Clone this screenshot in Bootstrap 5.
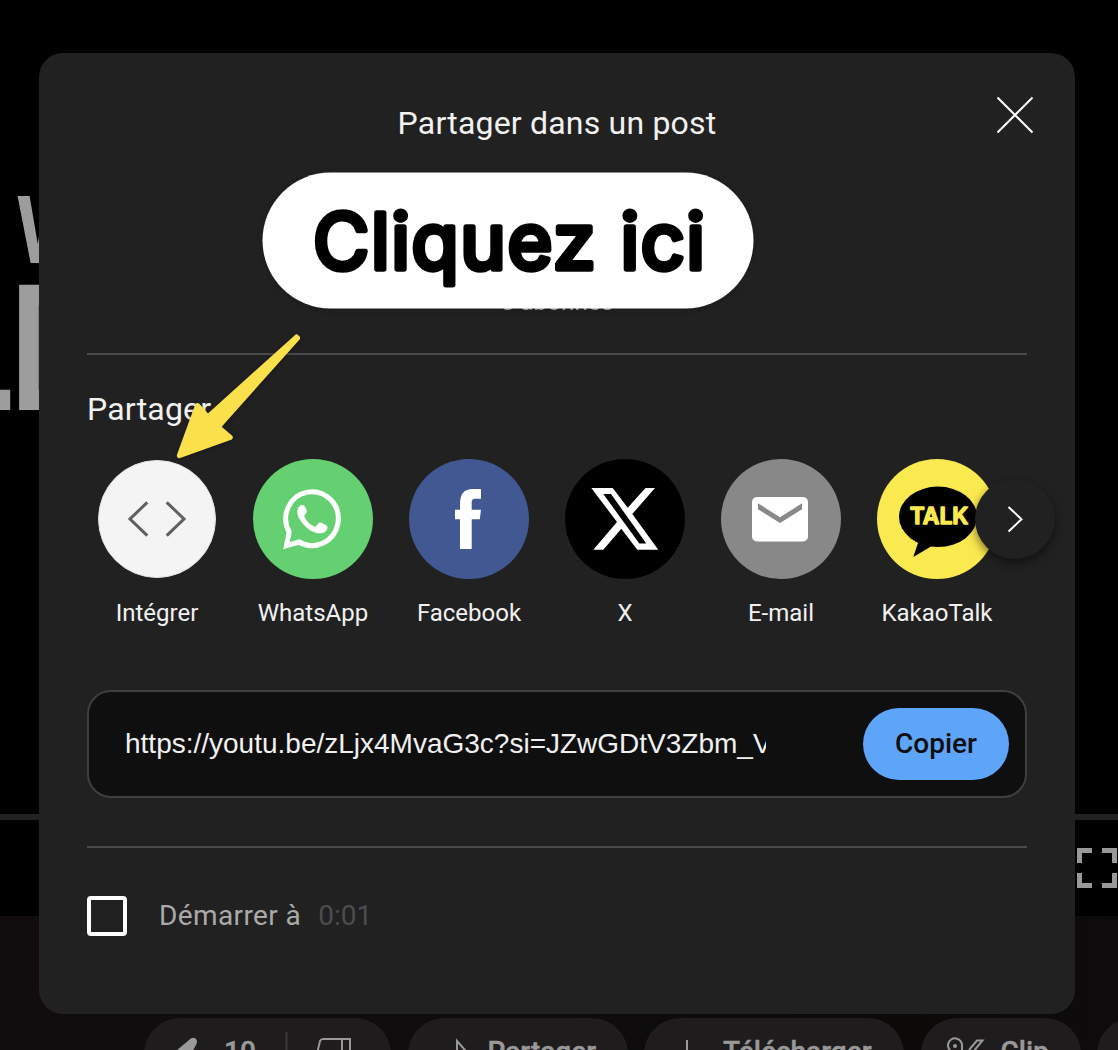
<!DOCTYPE html>
<html lang="fr">
<head>
<meta charset="utf-8">
<meta name="viewport" content="width=device-width, initial-scale=1">
<title>Partager</title>
<link href="https://cdn.jsdelivr.net/npm/bootstrap@5.3.0/dist/css/bootstrap.min.css" rel="stylesheet">
<style>
html,body{height:1050px;overflow:hidden}
body{background:#000;color:#f1f1f1;font-family:Roboto,"Liberation Sans",sans-serif}
svg{display:block;flex:none}
.watch{height:1050px}
.video{height:916px}
.frame-art{height:814px}
.seekbar{height:6px;background:#222}
.controls{padding:28px 1px 0 0}
.below{height:134px;padding:102px 0 0 144px;background:linear-gradient(90deg,#110d0e,#0e0c0d 50%,#0b0a09 80%,#0d0b0b);gap:16.5px}
.pill{height:72px;flex:none;border-radius:36px;background:#1e1c1d;color:#999;font-size:28px;font-weight:500;line-height:67px;-webkit-text-stroke:.4px #999}
.pill svg{margin-top:14px}
.p-like{width:247px}.p-share{width:220px}.p-dl{width:260px}.p-clip{width:160px}.p-more{width:72px}
.share-dialog{left:39px;top:53px;width:1036px;height:961px;border-radius:24px;background:#212121;padding:0 48px}
.dlg-head{height:300px;padding-top:46px}
.dlg-title{font-size:32px;line-height:48px;letter-spacing:.2px}
.subs{font-size:24px;line-height:32px;letter-spacing:.2px;margin-top:139px;color:#aaa}
.close-x{right:41px;top:43px}
.rule{height:2px;background:#4a4a4a}
.sec-title{font-size:32px;line-height:48px;margin-top:30px;letter-spacing:.2px}
.targets{margin:26px 0 0 -8px;width:936px}
.target{width:156px;font-size:24px}
.target span{line-height:32px;margin-top:18px}
.next{left:936px;top:426px;width:80px;height:80px;background:#212121;box-shadow:0 4px 10px rgba(0,0,0,.5)}
.linkbox{height:108px;margin-top:61px;border:2px solid #3f3f3f;border-radius:24px;background:#0f0f0f;padding:0 16px 0 36px}
.url{width:641px;overflow:hidden;white-space:nowrap;font:28px/40px "Liberation Sans",Arial,sans-serif;color:#f1f1f1}
.btn-copy{width:146px;height:72px;border-radius:36px;background:#5ea4f9;color:#0f0f0f;font-size:28px;font-weight:500;padding:0;border:0}
.btn-copy:hover{background:#5ea4f9;color:#0f0f0f}
.linkbox + .rule{margin-top:48px}
.start{margin-top:48px;font-size:28px;line-height:40px;letter-spacing:.4px;color:#aaa}
.form-check-input.start-check{width:40px;height:40px;border:4px solid #fff;border-radius:4px;background-color:transparent;margin:0 32px 0 0}
.time{margin-left:17px;color:#4d4d4d;letter-spacing:0}
.callout{left:262px;top:172px;filter:drop-shadow(0 1px 3px rgba(0,0,0,.2))}
.arrow{left:170px;top:328px;filter:drop-shadow(0 1px 2px rgba(0,0,0,.3))}
</style>
</head>
<body>
<main class="watch position-relative overflow-hidden">
  <section class="video">
    <div class="frame-art">
      <svg width="60" height="814" fill="#9d9d9d" font-family="Liberation Sans" font-weight="700">
        <text transform="translate(18.5 261.500) scale(.76 1)" font-size="94" stroke="#9d9d9d" stroke-width="2">W</text>
        <text transform="translate(-69 410) scale(.75 1)" font-size="182">L</text>
        <text transform="translate(10 410) scale(.75 1)" font-size="182">D</text>
      </svg>
    </div>
    <div class="seekbar"></div>
    <div class="controls d-flex justify-content-end">
      <svg width="40" height="40" fill="none" stroke="#999" stroke-width="5"><path d="M2.500 15V2.500H15M25 2.500H37.500V15M37.500 25V37.500H25M15 37.500H2.500V25"/></svg>
    </div>
  </section>
  <section class="below d-flex">
    <div class="pill p-like d-flex">
      <svg width="80" height="48" viewBox="0 0 80 48" fill="#999"><path d="M24 26L32 19L45 8Q49 4 52 7Q54 9 52 13L47 22L60 22V44H24Z"/></svg>
      <span>10</span>
      <svg width="120" height="48" viewBox="0 0 120 48" fill="none" stroke="#999" stroke-width="2"><path d="M30.500 0V48" stroke="#3a3839"/><path d="M60 26L64 9Q65 7 67 7H94V32H81M86 7V32"/></svg>
    </div>
    <div class="pill p-share d-flex">
      <svg width="80" height="48" viewBox="0 0 80 48" fill="none" stroke="#999" stroke-width="2"><path d="M34 24C40 22 44 20 49 19V9L64 26L49 40V30"/></svg>
      <span>Partager</span>
    </div>
    <div class="pill p-dl d-flex">
      <svg width="79" height="48" viewBox="0 0 79 48" fill="none" stroke="#999" stroke-width="2"><path d="M43 8V34M31 23L43 35L55 23"/></svg>
      <span>Télécharger</span>
    </div>
    <div class="pill p-clip d-flex">
      <svg width="80" height="48" viewBox="0 0 80 48" fill="none" stroke="#999" stroke-width="2"><path d="M32 20A7 7 0 1 1 41 14V20L47 27M48 18L56 8.500H61.500L52 20"/><circle cx="34" cy="14" r="1" fill="#999"/></svg>
      <span>Clip</span>
    </div>
    <div class="pill p-more"></div>
  </section>

  <section class="share-dialog position-absolute" role="dialog" aria-label="Partager">
    <div class="dlg-head text-center">
      <div class="dlg-title">Partager dans un post</div>
      <div class="subs">5 abonnés</div>
    </div>
    <svg class="close-x position-absolute" width="38" height="38" fill="none" stroke="#fff" stroke-width="2"><path d="M1.500 1.500L36.500 36.500M36.500 1.500L1.500 36.500"/></svg>
    <div class="rule"></div>
    <div class="sec-title">Partager</div>
    <div class="targets d-flex">
      <div class="target d-flex flex-column align-items-center">
        <svg width="120" height="120"><circle cx="60" cy="60" r="58.500" fill="#f4f4f4" stroke="#e2e2e2"/><path d="M50.300 43.300L33 60L50.300 76.700M69.700 43.300L87 60L69.700 76.700" fill="none" stroke="#606060" stroke-width="3"/></svg>
        <span>Intégrer</span>
      </div>
      <div class="target d-flex flex-column align-items-center">
        <svg width="120" height="120"><circle cx="60" cy="60" r="60" fill="#65d072"/><path d="M46 83A26.300 26.900 0 1 0 36.200 73L33.500 86.700Z" fill="none" stroke="#fff" stroke-width="5"/><path fill="#fff" d="M46.500 47.300C47.500 46 50.500 45.600 51.600 47C53 49.500 54 51.500 53.800 53C53.500 54.800 51.200 55.600 51.300 57C52.500 61.500 57.500 66.300 61.800 67.800C63.500 67.800 65.300 63.800 66.500 63.500C68.500 63.300 73.500 66.300 74.200 67.200C74.800 69.500 73.500 72.300 71.500 73.300C66 76 58 73 52.500 67.500C47 62 44.300 57 44.300 53C44.300 50.500 45.300 48.500 46.500 47.300Z"/></svg>
        <span>WhatsApp</span>
      </div>
      <div class="target d-flex flex-column align-items-center">
        <svg width="120" height="120"><circle cx="60" cy="60" r="60" fill="#425893"/><path fill="#fff" d="M51 90V60.300H46V50.700H51V45C51 35 55 30 64 30H72V39.700H67C63.500 39.700 62.700 41 62.700 44V50.700H72L70.800 60.300H62.700V90Z"/></svg>
        <span>Facebook</span>
      </div>
      <div class="target d-flex flex-column align-items-center">
        <svg width="120" height="120"><circle cx="60" cy="60" r="60"/><path fill="#fff" fill-rule="evenodd" d="M26.300 29H47.700L62.700 48.700L80.500 29H90L67.300 55L93.300 90.700H72.300L56.300 69.700L38.300 90.700H28.300L52 63ZM38.300 35L74.300 84.500H81.300L46 35Z"/></svg>
        <span>X</span>
      </div>
      <div class="target d-flex flex-column align-items-center">
        <svg width="120" height="120"><circle cx="60" cy="60" r="60" fill="#888"/><rect x="31" y="38" width="56" height="44.500" rx="5" fill="#fff"/><path fill="#888" d="M37 44.300L59 58.300L81 44.300V50.300L59 64L37 50.300Z"/></svg>
        <span>E-mail</span>
      </div>
      <div class="target d-flex flex-column align-items-center">
        <svg width="120" height="120"><circle cx="60" cy="60" r="60" fill="#fae94f"/><ellipse cx="61" cy="57.800" rx="39" ry="30.200"/><path d="M40 80L41 84L36.300 98L54 87.500V80Z"/><text x="32.800" y="65.300" font-family="Inter" font-weight="600" font-size="22.500" textLength="58.500" lengthAdjust="spacingAndGlyphs" fill="#fae94f" stroke="#fae94f" stroke-width="1.500" stroke-linejoin="round">TALK</text></svg>
        <span>KakaoTalk</span>
      </div>
    </div>
    <div class="next position-absolute rounded-circle">
      <svg width="80" height="80" fill="none" stroke="#fff" stroke-width="2"><path d="M33.500 28L46.500 40.300L33.500 52.500"/></svg>
    </div>
    <div class="linkbox d-flex align-items-center justify-content-between">
      <div class="url">https://youtu.be/zLjx4MvaG3c?si=JZwGDtV3Zbm_VxQ</div>
      <button class="btn btn-copy" type="button">Copier</button>
    </div>
    <div class="rule"></div>
    <div class="start d-flex align-items-center">
      <input class="form-check-input start-check" type="checkbox" aria-label="Démarrer à">
      <span>Démarrer à</span><span class="time">0:01</span>
    </div>
  </section>

  <svg class="callout position-absolute" width="492" height="137"><rect x=".5" y=".5" width="491" height="136" rx="68" fill="#fff"/><text x="51" y="97" font-family="Inter" font-weight="400" font-size="77" textLength="392" stroke="#000" stroke-width="5.500" stroke-linejoin="round">Cliquez ici</text></svg>
  <svg class="arrow position-absolute" width="140" height="140" viewBox="170 328 140 140"><path fill="#fae04b" stroke="#fae04b" stroke-width="5" stroke-linejoin="round" d="M296.500 337L297.500 338L218 427L230.300 437.300L179.300 455.700L197.500 405.500L207.700 417Z"/></svg>
</main>
<script src="https://cdn.jsdelivr.net/npm/bootstrap@5.3.0/dist/js/bootstrap.bundle.min.js"></script>
</body>
</html>
